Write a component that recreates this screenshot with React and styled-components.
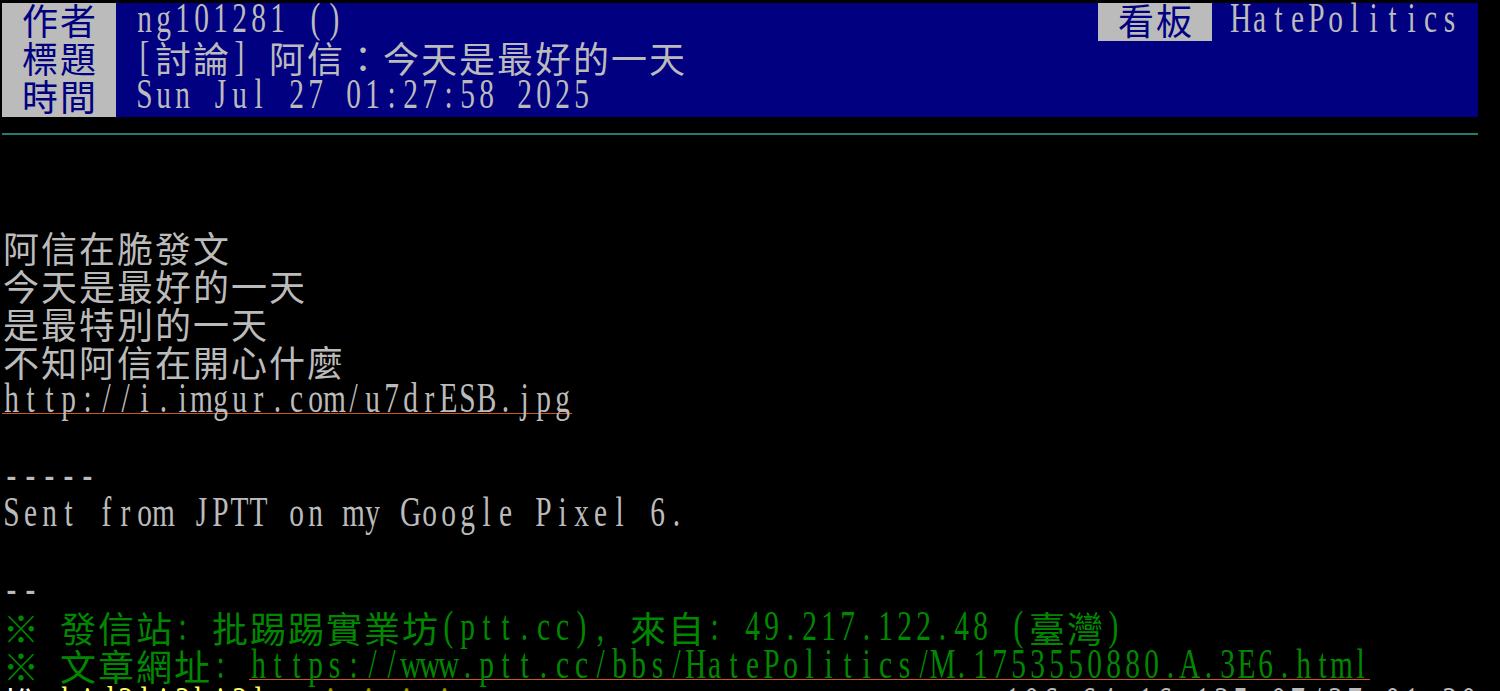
import React from 'react'
import styled, { createGlobalStyle } from 'styled-components'

const GlobalStyle = createGlobalStyle`
  html, body {
    margin: 0;
    padding: 0;
    background: #000;
  }
`

// half-width cell is 19px, full-width cell 38px, like the terminal grid
const isWide = (ch) =>
  /[\u1100-\u115f\u2e80-\ua4cf\uac00-\ud7a3\uf900-\ufaff\ufe30-\ufe4f\uff00-\uff60\uffe0-\uffe6\u203b]/.test(ch)

const Cell = styled.span`
  display: flex;
  justify-content: center;
  flex: none;
  height: 38px;
  white-space: pre;
  width: ${(p) => (p.$wide ? 38 : 19)}px;
  font-family: ${(p) =>
    p.$wide ? '"Noto Sans CJK TC", "Noto Sans CJK JP", sans-serif' : '"Liberation Serif", serif'};
  font-size: ${(p) => (p.$wide ? 36 : 42)}px;
  line-height: ${(p) => (p.$wide ? 32 : 30)}px;
  transform: ${(p) => (p.$wide ? 'none' : 'scaleX(0.7)')};
`

const Run = styled.span`
  display: flex;
  flex: none;
  color: ${(p) => p.$color || '#bbbbbb'};
  background: ${(p) => p.$bg || 'transparent'};
`

const Link = styled(Run)`
  background-image: linear-gradient(#c8581e, #c8581e);
  background-repeat: no-repeat;
  background-position: 0 30px;
  background-size: 100% 1px;
`

const Text = ({ children, as: Wrap = Run, ...rest }) => (
  <Wrap {...rest}>
    {Array.from(children).map((ch, i) => (
      <Cell key={i} $wide={isWide(ch)}>
        {ch === ' ' ? '\u00a0' : ch}
      </Cell>
    ))}
  </Wrap>
)

const Page = styled.div`
  width: 1476px;
  margin-left: 2px;
  padding-top: 3px;
`

const Meta = styled.div`
  background: #000080;
`

const MetaRow = styled.div`
  display: flex;
  height: 38px;
`

const Right = styled.div`
  display: flex;
  margin-left: auto;
`

const Divider = styled.div`
  height: 38px;
  padding-top: 16px;
  box-sizing: border-box;
`

const Rule = styled.div`
  height: 2px;
  background: #267a71;
`

const Line = styled.div`
  display: flex;
  height: 38px;
`

const GREEN = '#008800'

const metas = [
  [' 作者 ', ' ng101281 ()'],
  [' 標題 ', ' [討論] 阿信：今天是最好的一天'],
  [' 時間 ', ' Sun Jul 27 01:27:58 2025'],
]

const bodyLines = [
  '',
  '',
  '阿信在脆發文',
  '今天是最好的一天',
  '是最特別的一天',
  '不知阿信在開心什麼',
]

export default function App() {
  return (
    <>
      <GlobalStyle />
      <Page>
        <Meta>
          {metas.map(([label, value], i) => (
            <MetaRow key={label}>
              <Text $bg="#bbbbbb" $color="#000080">{label}</Text>
              <Text>{value}</Text>
              {i === 0 && (
                <Right>
                  <Text $bg="#bbbbbb" $color="#000080">{' 看板 '}</Text>
                  <Text>{' HatePolitics '}</Text>
                </Right>
              )}
            </MetaRow>
          ))}
        </Meta>
        <Divider>
          <Rule />
        </Divider>

        {bodyLines.map((t, i) => (
          <Line key={i}>
            <Text>{t}</Text>
          </Line>
        ))}
        <Line>
          <Text as={Link}>http://i.imgur.com/u7drESB.jpg</Text>
        </Line>
        <Line />
        <Line>
          <Text>-----</Text>
        </Line>
        <Line>
          <Text>Sent from JPTT on my Google Pixel 6.</Text>
        </Line>
        <Line />
        <Line>
          <Text>--</Text>
        </Line>
        <Line>
          <Text $color={GREEN}>※ 發信站: 批踢踢實業坊(ptt.cc), 來自: 49.217.122.48 (臺灣)</Text>
        </Line>
        <Line>
          <Text $color={GREEN}>※ 文章網址: </Text>
          <Text as={Link} $color={GREEN}>https://www.ptt.cc/bbs/HatePolitics/M.1753550880.A.3E6.html</Text>
        </Line>
        <Line>
          <Text $color="#ffffff">推 </Text>
          <Text $color="#ffff66">kid3li3ki3l</Text>
          <Text $color="#999900">: 哈哈哈哈</Text>
          <Right>
            <Text>106.64.16.135 07/27 01:30</Text>
          </Right>
        </Line>
      </Page>
    </>
  )
}
